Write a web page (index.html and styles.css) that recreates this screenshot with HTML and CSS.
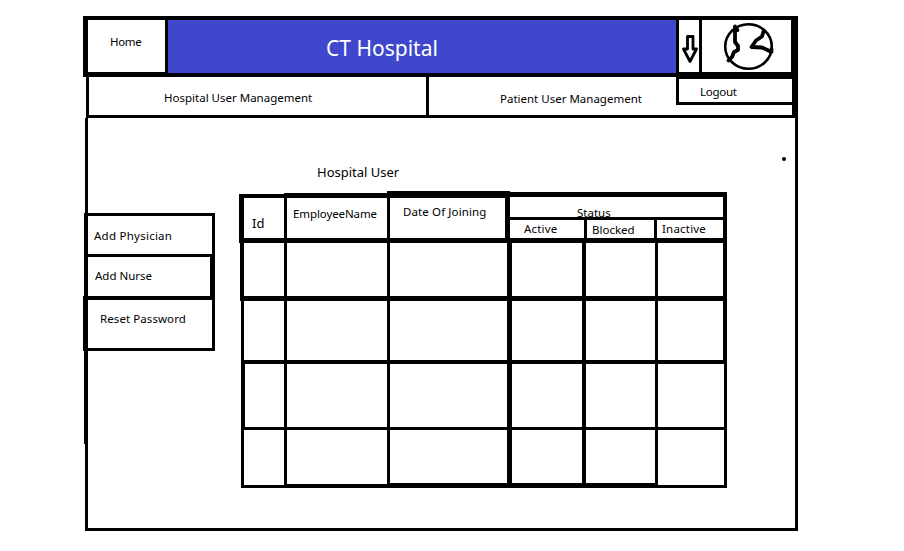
FILE: index.html
```html
<!DOCTYPE html>
<html lang="en">
<head>
<meta charset="utf-8">
<title>CT Hospital</title>
<link rel="stylesheet" href="styles.css">
</head>
<body>
<div class="frame">
  <header class="top">
    <a class="home"><span class="t-home">Home</span></a>
    <h1 class="brand">CT Hospital</h1>
    <div class="toggle">
      <svg width="20" height="52" viewBox="679 20 20 52"><path d="M687.500 36.500h5.500v12.500h3.500l-6.500 12.500-6.500-12.500h4z" fill="none" stroke="#000" stroke-width="2.800" stroke-linejoin="round"/></svg>
    </div>
    <div class="avatar">
      <svg width="89" height="52" viewBox="702 20 89 52" fill="none" stroke="#000" stroke-linejoin="round" stroke-linecap="round"><ellipse cx="748.500" cy="46.500" rx="23.300" ry="22.300" stroke-width="2.600"/><path d="M735 26.500v15.500l3 4v4l-4 2-2 5-3.500 3.500M736 30h1.500M763.500 31.500l-1.500 5-6 4-4.500 6.500 10.500.5 9.500 4.500v-3" stroke-width="3.800"/></svg>
    </div>
  </header>
  <nav class="tabs">
    <a class="tab tab-users">Hospital User Management</a>
    <a class="tab tab-patients">Patient User Management</a>
    <div class="logout"><span class="t-logout">Logout</span></div>
  </nav>
  <div class="body">
    <aside class="side">
      <a class="item physician"><span class="t-physician">Add Physician</span></a>
      <a class="item nurse">Add Nurse</a>
      <a class="item reset"><span class="t-reset">Reset Password</span></a>
      <div class="rail"></div>
    </aside>
    <main class="main">
      <h2 class="title">Hospital User</h2>
      <div class="head">
        <div class="h-id">Id</div>
        <div class="h-name"><span class="t-name">EmployeeName</span></div>
        <div class="h-date"><span class="t-date">Date Of Joining</span></div>
        <div class="h-status">
          <div class="status">Status</div>
          <div class="subs">
            <div class="s-active"><span class="t-active">Active</span></div>
            <div class="s-blocked">Blocked</div>
            <div class="s-inactive"><span class="t-active">Inactive</span></div>
          </div>
        </div>
      </div>
      <div class="row r1"><i></i><i></i><i></i><i></i><i></i><i></i></div>
      <div class="row r2"><i></i><i></i><i></i><i></i><i></i><i></i></div>
      <div class="row r3"><i></i><i></i><i></i><i></i><i></i><i></i></div>
      <div class="row r4"><i></i><i></i><i></i><i></i><i></i><i></i></div>
    </main>
    <span class="dot"></span>
  </div>
</div>
</body>
</html>
```
FILE: styles.css
```css
* { box-sizing: border-box; }
body { margin: 0; background: #fff; color: #000; font: 11.5px/16px "Noto Sans", sans-serif; height: 551px; overflow: hidden; white-space: nowrap; }
h1, h2 { margin: 0; font-weight: 400; }

.t-home { letter-spacing: -0.35px; }
.t-logout { letter-spacing: -0.25px; }
.t-physician { letter-spacing: 0.25px; }
.t-reset { letter-spacing: 0.08px; }
.t-name { letter-spacing: -0.1px; }
.t-date { letter-spacing: 0.12px; }
.t-active { letter-spacing: 0.2px; }

.frame { width: 715px; height: 515px; margin: 16px 0 0 83px; display: flex; flex-direction: column; }

.top { display: flex; height: 61px; background: #000; padding: 4px 7px 0 5px; flex: none; }
.home { width: 77px; height: 52px; background: #fff; padding: 14px 0 0 22px; margin-right: 3px; display: block; }
.brand { width: 508px; height: 53px; background: #3f48cc; color: #fff; padding: 12px 0 0 158px; font-size: 21px; line-height: 32px; margin-right: 3px; }
.toggle { width: 20px; height: 52px; background: #fff; margin-right: 3px; }
.avatar { width: 89px; height: 52px; background: #fff; }
.toggle svg, .avatar svg { display: block; }

.tabs { display: flex; height: 41px; margin-left: 3px; border: solid #000; border-width: 0 6px 3px 3px; position: relative; flex: none; }
.tab-users { width: 340px; border-right: 3px solid #000; padding: 13px 0 0 75px; }
.tab-patients { width: 363px; padding: 14px 0 0 71px; }
.logout { position: absolute; right: 0; top: 0; width: 116px; height: 28px; border: solid #000; border-width: 2px 0 3px 3px; padding: 5px 0 0 21px; background: #fff; }

.body { display: flex; flex: 1; margin-left: 2px; border: solid #000; border-width: 0 3px 3px; position: relative; }
.side { width: 132px; margin: 95px 0 0 -5px; flex: none; }
.item { display: block; margin-left: 1px; border: solid #000; border-width: 3px 3px 0 4px; height: 41px; }
.physician { padding: 12px 0 0 6px; }
.nurse { height: 42px; border-right-width: 5px; padding: 11px 0 0 7px; }
.reset { height: 55px; margin-left: 0; border-width: 4px 3px 3px 5px; padding: 11px 0 0 12px; }
.rail { width: 4px; height: 93px; margin-left: 1px; background: #000; }

.main { width: 488px; margin-left: 24px; padding-top: 45px; flex: none; }
.title { font-size: 13px; line-height: 18px; height: 28px; padding-left: 78px; }
.head { display: flex; align-items: flex-end; height: 52px; }
.head > div { border: 0 solid #000; }
.head .h-id { width: 45px; height: 49px; border-width: 4px 0 5px 5px; padding: 17px 0 0 8px; font-size: 13px; }
.head .h-name { width: 103px; height: 50px; border-width: 5px 0 5px 3px; padding: 8px 0 0 6px; }
.head .h-date { width: 123px; height: 52px; border-width: 7px 5px 5px 3px; padding: 6px 0 0 13px; }
.head .h-status { width: 217px; height: 51px; border-width: 5px 4px 5px 0; }
.status { height: 20px; padding: 8px 0 0 67px; }
.subs { display: flex; height: 21px; border-top: 3px solid #000; line-height: 18px; }
.s-active { width: 74px; padding-left: 14px; }
.s-blocked { width: 70px; border-left: 3px solid #000; padding: 1px 0 0 5px; }
.s-inactive { width: 69px; border-left: 3px solid #000; padding-left: 5px; }

.row { display: flex; margin-left: 2px; width: 486px; border-bottom: 4px solid #000; }
.row i { border-left: 3px solid #000; }
.row i:nth-child(1) { width: 43px; }
.row i:nth-child(2) { width: 103px; }
.row i:nth-child(3) { width: 120px; }
.row i:nth-child(4) { width: 75px; border-left-width: 5px; }
.row i:nth-child(5) { width: 73px; border-left-width: 4px; }
.row i:nth-child(6) { width: 72px; border-right: 3px solid #000; }
.r1 { height: 58px; margin-left: 1px; width: 487px; border-bottom-width: 5px; }
.r1 i:nth-child(1) { width: 44px; border-left-width: 4px; }
.r1 i:nth-child(6), .r2 i:nth-child(6) { border-right-width: 4px; }
.r2 { height: 63px; }
.r3 { height: 66px; border-bottom-width: 3px; }
.r3 i:nth-child(1) { border-left-width: 4px; }
.r4 { height: 58px; border-bottom-width: 3px; }
.r4 i:nth-child(2) { border-bottom: 1px solid #000; }
.r4 i:nth-child(n+3):nth-child(-n+5) { border-bottom: 2px solid #000; }

.dot { position: absolute; left: 694px; top: 39px; width: 4px; height: 4px; border-radius: 2px; background: #000; }
```
